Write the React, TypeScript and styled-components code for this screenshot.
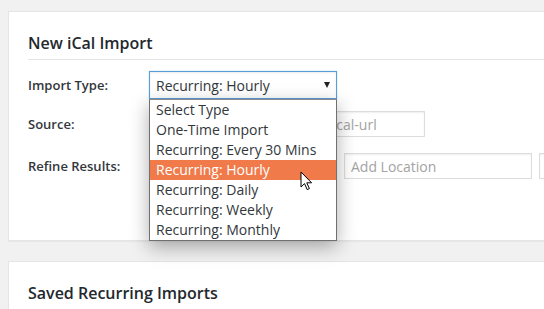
import React from "react";
import styled, { createGlobalStyle } from "styled-components";

const Global = createGlobalStyle`
  html, body { margin: 0; padding: 0; background: #f1f1f1; overflow: hidden; }
  body { font-family: "Open Sans", "Noto Sans", sans-serif; color: #444; }
  * { box-sizing: border-box; }
`;

const Page = styled.div`
  width: 620px;
  padding: 11px 0 0 8px;
  display: flex;
  flex-direction: column;
  gap: 20px;
`;

const Card = styled.section<{ $pad?: number }>`
  background: #fff;
  border: 1px solid #e5e5e5;
  box-shadow: 0 1px 1px rgba(0, 0, 0, 0.04);
  padding: 0 0 ${(p) => p.$pad ?? 0}px 19px;
`;

const Title = styled.h2<{ $rule?: boolean }>`
  margin: 0;
  padding: 20px 0 5px;
  font-size: 16px;
  font-weight: 600;
  line-height: 22px;
  color: #23282d;
  border-bottom: ${(p) => (p.$rule ? "1px solid #e5e5e5" : "none")};
`;

const Row = styled.div<{ $top: number; $h: number }>`
  display: flex;
  align-items: center;
  margin-top: ${(p) => p.$top}px;
  height: ${(p) => p.$h}px;
`;

const Label = styled.div`
  width: 121px;
  flex: none;
  font-size: 13px;
  font-weight: 600;
  color: #32373c;
`;

const SelectWrap = styled.div`
  position: relative;
  width: 188px;
  height: 28px;
  z-index: 5;
`;

const SelectBox = styled.div`
  height: 28px;
  border: 1px solid #5b9dd9;
  background: #fff;
  box-shadow: inset 0 1px 2px rgba(0, 0, 0, 0.08), 0 0 1px rgba(30, 140, 190, 0.5);
  display: flex;
  align-items: center;
  justify-content: space-between;
  padding: 0 6px 0 6px;
  font-size: 14px;
  color: #32373c;
`;

const Arrow = styled.span`
  width: 0;
  height: 0;
  border-left: 3.5px solid transparent;
  border-right: 3.5px solid transparent;
  border-top: 6px solid #222;
`;

const List = styled.ul`
  position: absolute;
  top: 28px;
  left: 0;
  width: 188px;
  margin: 0;
  padding: 0;
  list-style: none;
  background: #fff;
  border: 1px solid #707070;
  border-top-color: #8a8a8a;
  box-shadow: 0 6px 18px rgba(0, 0, 0, 0.32);
`;

const Item = styled.li<{ $active?: boolean }>`
  height: 20px;
  line-height: 20px;
  padding-left: 6px;
  font-size: 14px;
  white-space: nowrap;
  color: ${(p) => (p.$active ? "#fff" : "#32373c")};
  background: ${(p) => (p.$active ? "#f07a49" : "transparent")};
`;

const Input = styled.input<{ $w: number }>`
  width: ${(p) => p.$w}px;
  height: 26px;
  flex: none;
  border: 1px solid #ddd;
  box-shadow: inset 0 1px 2px rgba(0, 0, 0, 0.07);
  background: #fff;
  font-family: "Open Sans", "Noto Sans", sans-serif;
  font-size: 14px;
  padding: 0 6px;
  color: #32373c;
  outline: none;
  &::placeholder { color: #a3a3a3; }
`;

const Inputs = styled.div`
  display: flex;
  gap: 7px;
`;

const Cursor = styled.svg`
  position: absolute;
  left: 151px;
  top: 100px;
  z-index: 10;
`;

const options = [
  "Select Type",
  "One-Time Import",
  "Recurring: Every 30 Mins",
  "Recurring: Hourly",
  "Recurring: Daily",
  "Recurring: Weekly",
  "Recurring: Monthly",
];

export default function App() {
  return (
    <>
      <Global />
      <Page>
        <Card $pad={61}>
          <Title $rule>New iCal Import</Title>
          <Row $top={11} $h={28}>
            <Label>Import Type:</Label>
            <SelectWrap>
              <SelectBox>
                <span>Recurring: Hourly</span>
                <Arrow />
              </SelectBox>
              <List>
                {options.map((o, i) => (
                  <Item key={o} $active={i === 3}>
                    {o}
                  </Item>
                ))}
              </List>
              <Cursor width="13" height="20" viewBox="0 0 13 20">
                <path
                  d="M1 1 L1 16 L4.5 12.6 L7.2 18.6 L9.4 17.6 L6.8 11.8 L11.6 11.8 Z"
                  fill="#fff"
                  stroke="#000"
                  strokeWidth="1"
                  strokeLinejoin="miter"
                />
              </Cursor>
            </SelectWrap>
          </Row>
          <Row $top={12} $h={26}>
            <Label>Source:</Label>
            <Input $w={276} placeholder="https://www.example.com/ical-url" />
          </Row>
          <Row $top={16} $h={26}>
            <Label>Refine Results:</Label>
            <Inputs>
              <Input $w={188} placeholder="Add Keywords" />
              <Input $w={188} placeholder="Add Location" />
              <Input $w={188} placeholder="Add Radius" />
            </Inputs>
          </Row>
        </Card>
        <Card $pad={40}>
          <Title>Saved Recurring Imports</Title>
        </Card>
      </Page>
    </>
  );
}
